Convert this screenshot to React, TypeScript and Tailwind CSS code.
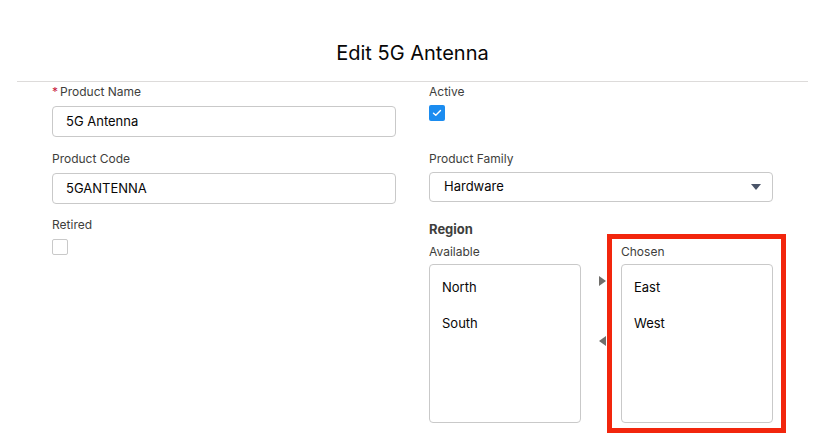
import React from "react";

function Label({ children, required }: { children: React.ReactNode; required?: boolean }) {
  return (
    <div className="h-[18px] flex items-center text-[12px] leading-[18px] text-[#3e3e3c]">
      {required && <span className="text-[#c8203c] mr-[2px] text-[12px]">*</span>}
      {children}
    </div>
  );
}

function TextInput({ value }: { value: string }) {
  return (
    <div className="h-[31px] border border-[#c9c9c9] rounded-[4px] flex items-center pl-[13px] text-[13px] text-[#080707]">
      {value}
    </div>
  );
}

function ListBox({ items }: { items: string[] }) {
  return (
    <div className="w-[152px] h-[159px] border border-[#c9c9c9] rounded-[4px] pt-[13px] pl-[12px] text-[13px] text-[#080707] flex flex-col gap-[18px]">
      {items.map((i) => (
        <div key={i} className="h-[18px] leading-[18px]">
          {i}
        </div>
      ))}
    </div>
  );
}

export default function App() {
  return (
    <div
      className="w-[825px] h-[440px] bg-white overflow-hidden"
      style={{ fontFamily: "Inter, 'Noto Sans', sans-serif" }}
    >
      <div className="mx-[17px] h-[82px] border-b border-[#dddbda] flex items-center justify-center pt-[24px]">
        <h1 className="text-[20px] text-[#080707] leading-[24px]">Edit 5G Antenna</h1>
      </div>
      <div className="grid grid-cols-[344px_344px] gap-x-[33px] pl-[52px] pt-[1px]">
        {/* Left column */}
        <div className="flex flex-col">
          <Label required>Product Name</Label>
          <div className="mt-[5px]">
            <TextInput value="5G Antenna" />
          </div>
          <div className="mt-[13px]">
            <Label>Product Code</Label>
          </div>
          <div className="mt-[5px]">
            <TextInput value="5GANTENNA" />
          </div>
          <div className="mt-[12px]">
            <Label>Retired</Label>
          </div>
          <div className="mt-[5px] w-[16px] h-[16px] border border-[#c9c9c9] rounded-[2px] bg-white" />
        </div>
        {/* Right column */}
        <div className="flex flex-col">
          <Label>Active</Label>
          <div className="mt-[4px] w-[16px] h-[16px] rounded-[2px] bg-[#1b8cf0] flex items-center justify-center">
            <svg width="10" height="8" viewBox="0 0 10 8" fill="none">
              <path d="M1.5 4.2 L3.8 6.3 L8.5 1.6" stroke="white" strokeWidth="1.4" strokeLinecap="round" strokeLinejoin="round" />
            </svg>
          </div>
          <div className="mt-[29px]">
            <Label>Product Family</Label>
          </div>
          <div className="mt-[4px] h-[30px] border border-[#c9c9c9] rounded-[4px] flex items-center justify-between pl-[14px] pr-[11px] text-[13px] text-[#080707]">
            <span>Hardware</span>
            <svg width="10" height="6" viewBox="0 0 10 6">
              <path d="M0 0 L10 0 L5 6 Z" fill="#4a5468" />
            </svg>
          </div>
          <div className="mt-[18px] h-[18px] leading-[18px] text-[13px] font-bold text-[#3e3e3c]">Region</div>
          <div className="mt-[5px] flex">
            <div className="flex flex-col">
              <Label>Available</Label>
              <div className="mt-[3px]">
                <ListBox items={["North", "South"]} />
              </div>
            </div>
            <div className="w-[40px] shrink-0 flex flex-col items-center pt-[33px] pl-[2px]">
              <svg width="7" height="10" viewBox="0 0 7 10">
                <path d="M0 0 L7 5 L0 10 Z" fill="#706e6b" />
              </svg>
              <svg className="mt-[50px]" width="7" height="10" viewBox="0 0 7 10">
                <path d="M7 0 L0 5 L7 10 Z" fill="#706e6b" />
              </svg>
            </div>
            <div className="relative flex flex-col shrink-0">
              <Label>Chosen</Label>
              <div className="mt-[3px]">
                <ListBox items={["East", "West"]} />
              </div>
              <div className="absolute left-[-14px] top-[-9px] w-[179px] h-[199px] border-[5px] border-[#f2260d]" />
            </div>
          </div>
        </div>
      </div>
    </div>
  );
}
